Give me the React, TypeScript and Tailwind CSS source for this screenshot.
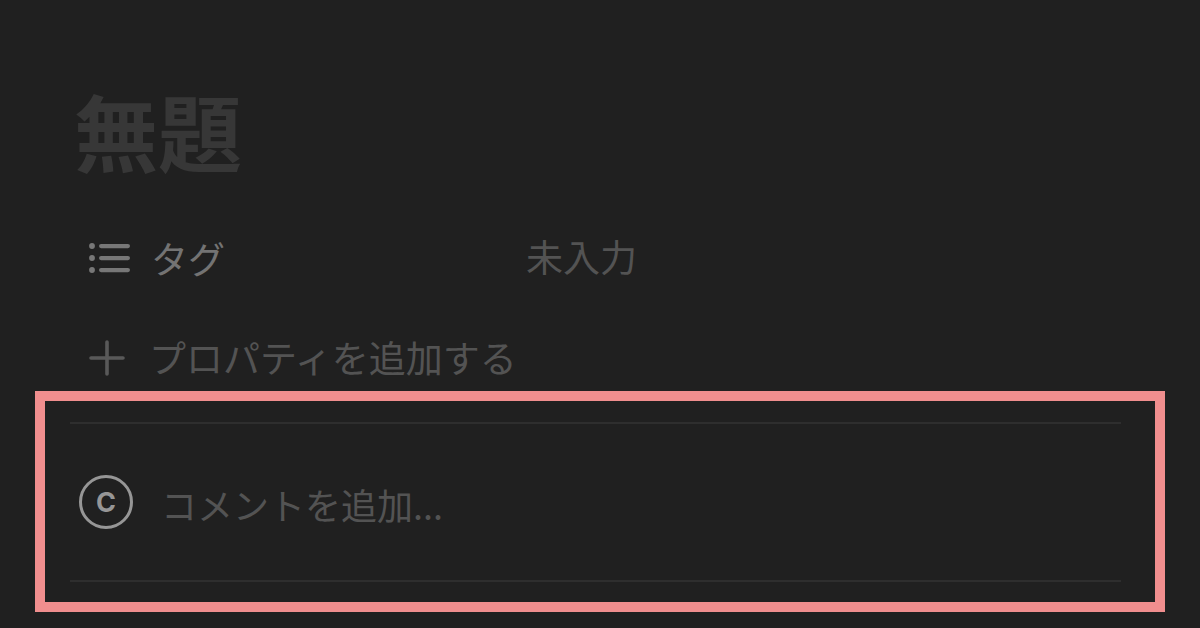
import React from "react";

function ListIcon() {
  return (
    <svg viewBox="0 0 44 36" className="h-9 w-11 shrink-0" fill="#777777" aria-hidden="true">
      {[6, 18, 30].map((y) => (
        <g key={y}>
          <circle cx="5" cy={y} r="2.9" />
          <rect x="12" y={y - 2} width="31" height="4.2" rx="2.1" />
        </g>
      ))}
    </svg>
  );
}

function PlusIcon() {
  return (
    <svg viewBox="0 0 40 40" className="h-10 w-10 shrink-0" stroke="#595959" strokeWidth="3.6" strokeLinecap="round" aria-hidden="true">
      <path d="M4 20H36M20 4V36" />
    </svg>
  );
}

export default function App() {
  return (
    <main className="min-h-screen bg-[#202020] pt-[74px] pb-4 font-['Noto_Sans_CJK_JP',sans-serif] text-[37px] leading-[54px] text-[#535353]">
      <header className="px-[74px]">
        <h1 className="text-[84px] leading-[112px] font-bold text-[#373737]">無題</h1>
        <div className="mt-[42px] flex h-[60px] items-center">
          <div className="flex w-[452px] shrink-0 items-center gap-5 pl-[13px] text-[#737373]">
            <ListIcon />
            <span>タグ</span>
          </div>
          <button type="button" className="pb-1">未入力</button>
        </div>
        <button type="button" className="mt-10 flex h-[60px] items-center gap-[22px] pl-[13px]">
          <PlusIcon />
          <span className="pb-0.5">プロパティを追加する</span>
        </button>
      </header>
      <section aria-label="コメント" className="mx-[35px] mt-[3px] border-10 border-[#f08e8e] pt-[21px] pr-[34px] pb-5 pl-[25px]">
        <div className="flex h-40 items-center gap-7 border-y-2 border-[#2e2e2e] pl-[9px]">
          <span className="flex h-[54px] w-[54px] shrink-0 items-center justify-center rounded-full border-3 border-[#969696] font-['Inter',sans-serif] text-[27px] leading-none font-bold text-[#969696]">
            C
          </span>
          <input
            type="text"
            aria-label="コメントを追加"
            placeholder="コメントを追加..."
            className="min-w-0 flex-1 bg-transparent pt-1 text-4xl outline-none placeholder:text-[#535353]"
          />
        </div>
      </section>
    </main>
  );
}
